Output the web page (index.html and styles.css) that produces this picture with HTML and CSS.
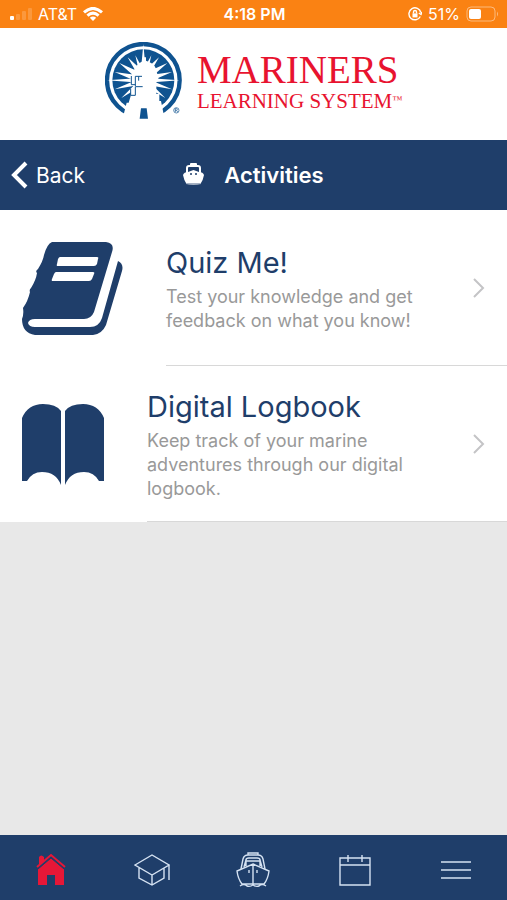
FILE: index.html
```html
<!DOCTYPE html>
<html lang="en">

<head>
  <meta charset="UTF-8">
  <meta name="viewport" content="width=device-width, initial-scale=1">
  <title>Activities</title>
  <link rel="stylesheet" href="styles.css">
</head>

<body>
  <div class="status-bar">
    <div class="status-left">
      <svg width="22" height="14" viewBox="0 0 22 14" fill="#fff">
        <rect x="0" y="9" width="4" height="4" rx="1" />
        <rect x="6" y="7" width="4" height="6" rx="1" opacity=".18" />
        <rect x="12" y="4" width="4" height="9" rx="1" opacity=".18" />
        <rect x="18" y="1" width="4" height="12" rx="1" opacity=".18" />
      </svg>
      <span>AT&amp;T</span>
      <svg width="20" height="14" viewBox="0 0 20 14" fill="none" stroke="#fff" stroke-width="3">
        <path d="M1 5.4Q10-2.6 19 5.4M4.4 8.6Q10 3.700 15.6 8.6" />
        <path d="M10 14L6.8 10.8Q10 8.2 13.2 10.8Z" fill="#fff" stroke="none" />
      </svg>
    </div>
    <div class="status-time">4:18 PM</div>
    <div class="status-right">
      <svg width="14" height="14" viewBox="0 0 14 14" fill="none" stroke="#fff" stroke-width="1.4">
        <path d="M12.3 9.5A6 6 0 1 1 12.8 5.500M10.8 6L13 7.5L14 5" />
        <rect x="4.5" y="6.4" width="5" height="4" fill="#fff" stroke="none" />
        <path d="M5.5 6.5V5A1.5 1.5 0 0 1 8.5 5V6.5" />
      </svg>
      <span>51%</span>
      <svg width="33" height="16" viewBox="0 0 33 16">
        <rect x="1" y="1" width="28" height="14" rx="4" fill="none" stroke="#fff" stroke-opacity=".45" />
        <rect x="3" y="3" width="12" height="10" rx="2" fill="#fff" />
        <path d="M31 5.5Q33 8 31 10.5Z" fill="#fff" opacity=".45" />
      </svg>
    </div>
  </div>

  <header class="brand">
    <svg class="brand-mark" viewBox="27 22 231 237">
      <circle cx="142" cy="137" r="109" fill="#fff" stroke="#0f5390" stroke-width="13" />
      <circle cx="142" cy="137" r="93" fill="#0f5390" />
      <!-- compass points and light rays -->
      <g fill="#fff">
        <path d="M142 28L152 137H132ZM33 137L142 129V145ZM251 137L142 129V145Z" />
        <path d="M70 85L152 122L134 142ZM95 68L154 122L134 136ZM118 62L154 128L134 134ZM56 112L144 124L140 148Z" />
        <path d="M214 85L132 122L150 142ZM189 68L130 122L150 136ZM166 62L130 128L150 134ZM228 112L140 124L144 148Z" />
        <path d="M56 164L144 126L146 148ZM76 190L136 130L150 146ZM228 164L140 126L138 148ZM208 190L148 130L134 146Z" />
      </g>
      <!-- lighthouse -->
      <path d="M142 68H150V78Q182 88 183 116L187 121V139H181V178H190V199H195L207 259H78L92 204H98L104 184V162H112V151H106V120H111Q114 91 142 78Z" fill="#fff" />
      <path d="M104 162V182H118V156H140M118 154V125H138M128 125V138M106 124V150H118" fill="none" stroke="#0f5390" stroke-width="3" />
      <path d="M135 221H152L156 252H131Z" fill="#0f5390" />
      <circle cx="241" cy="227" r="8" fill="none" stroke="#0f5390" stroke-width="2" />
      <path d="M238 232V222H242Q246 225 242 227H238M242 227L245 232" fill="none" stroke="#0f5390" stroke-width="2" />
    </svg>
    <div class="brand-text">
      <div class="brand-name">MARINERS</div>
      <div class="brand-sub">LEARNING SYSTEM<span class="brand-tm">™</span></div>
    </div>
  </header>

  <nav class="title-bar">
    <button class="back" type="button">
      <svg width="18" height="28" viewBox="0 0 18 28" fill="none" stroke="#fff" stroke-width="4">
        <path d="M16 2L4 14L16 26" />
      </svg>
      Back
    </button>
    <h1 class="page-title">
      <svg width="21" height="24" viewBox="0 0 21 24" fill="#fff">
        <path d="M4 10V5Q4 3 6 3H15Q17 3 17 5V10" fill="none" stroke="#fff" stroke-width="2" />
        <rect x="7" y="0" width="7" height="3" rx="1" />
        <path d="M0 12Q1 9 5 9L10.5 7L16 9Q20 9 21 12Q20 17 18 20H3Q1 17 0 12Z" />
        <path d="M3 20H18V21Q15 22 10.5 22Q6 22 3 21Z" opacity=".6" />
        <path d="M8 10V12M13 10V12" stroke="#1f3e6a" stroke-width="1.5" />
      </svg>
      Activities
    </h1>
  </nav>

  <main class="list">
    <a class="row" href="#quiz">
      <svg class="row-icon-book" viewBox="0 0 101 93">
        <path d="M30 0H84Q93 1 90 10L72 70Q69 77 62 77H13Q7 77 6 81Q7 85 13 85H68Q77 85 80 76L96 19Q102 22 100 29L84 83Q80 92 71 93H13Q0 91 0 77Q2 72 1 66Q6 59 8 50Q7 48 9 46Q14 38 15 31Q13 29 16 27Q21 19 22 13Q25 2 30 0Z" fill="#1f3e6a" />
        <path d="M38 15H75Q77 15 76 17L75 22Q74 24 72 24H36Q34 24 35 22L36 17Q37 15 38 15ZM34 30H71Q73 30 72 32L70 37Q69 39 67 39H31Q29 39 30 37L32 32Q33 30 34 30Z" fill="#fff" />
      </svg>
      <div class="row-body">
        <div class="row-text">
          <h2>Quiz Me!</h2>
          <p>Test your knowledge and get feedback on what you know!</p>
        </div>
        <svg class="chevron" viewBox="0 0 12 20">
          <path d="M1 1L10 10L1 19" />
        </svg>
      </div>
    </a>
    <a class="row" href="#logbook">
      <svg class="row-icon-pages" viewBox="0 0 82 81">
        <path d="M0 77V14Q6 0 21 0Q34 0 39 7V81Q34 68 20 68Q10 68 5 77ZM82 77V14Q76 0 61 0Q48 0 43 7V81Q48 68 62 68Q72 68 77 77Z" fill="#1f3e6a" />
      </svg>
      <div class="row-body">
        <div class="row-text">
          <h2>Digital Logbook</h2>
          <p>Keep track of your marine adventures through our digital logbook.</p>
        </div>
        <svg class="chevron" viewBox="0 0 12 20">
          <path d="M1 1L10 10L1 19" />
        </svg>
      </div>
    </a>
  </main>

  <nav class="tab-bar">
    <a href="#home" aria-label="Home">
      <svg width="32" height="34" viewBox="0 0 32 34" fill="#e61737">
        <path d="M4 13V4Q6 1 9 4V8L4 13ZM3 16L16 5L29 16V32H20V22H12V32H3Z" />
        <path d="M2 14L16 2L30 14" fill="none" stroke="#e61737" stroke-width="2" />
        <path d="M3 16L16 5L29 16" fill="none" stroke="#1f3e6a" stroke-width="1" />
      </svg>
    </a>
    <a href="#courses" aria-label="Courses">
      <svg class="tab-line" width="36" height="34" viewBox="0 0 36 34">
        <path d="M1 12L18 2L35 12L18 22ZM5 15V25L18 32L30 25V15M18 22V32M35 12V27" />
      </svg>
    </a>
    <a href="#activities" aria-label="Activities">
      <svg class="tab-line" width="34" height="36" viewBox="0 0 34 36">
        <path d="M5 17L7 7Q8 3 12 3H22Q26 3 27 7L29 17M12 3V1H22V3M8 15L10 8Q10 6 13 6H21Q24 6 24 8L26 15M10 14V9H24V14" />
        <path d="M17 12L33 19Q32 27 28 32H6Q2 27 1 19ZM17 12V33M4 34Q8 31 11 34Q14 35 17 33Q20 35 23 34Q26 31 30 34M13 18V21M21 18V21" />
      </svg>
    </a>
    <a href="#calendar" aria-label="Calendar">
      <svg class="tab-line" width="32" height="34" viewBox="0 0 32 34">
        <path d="M1 5H31V32H1ZM1 12H31M9 2V9M23 2V9" />
      </svg>
    </a>
    <a href="#menu" aria-label="Menu">
      <svg class="tab-line" width="32" height="34" viewBox="0 0 32 34">
        <path d="M1 9H31M1 17H31M1 25H31" />
      </svg>
    </a>
  </nav>
</body>

</html>
```
FILE: styles.css
```css
* {
  box-sizing: border-box;
}

body {
  margin: 0;
  min-height: 100vh;
  display: flex;
  flex-direction: column;
  font-family: Inter, "Helvetica Neue", Arial, sans-serif;
  background-color: #e8e8e8;
}

svg {
  display: block;
  flex-shrink: 0;
}

a {
  color: inherit;
  text-decoration: none;
}

h1, h2, p {
  margin: 0;
  font-weight: 400;
}

/* status bar */
.status-bar {
  display: grid;
  grid-template-columns: 1fr auto 1fr;
  align-items: center;
  height: 28px;
  padding: 0 8px 0 10px;
  color: #fff;
  background-color: #fa8213;
  font-size: 16px;
  line-height: 20px;
}

.status-left,
.status-right {
  display: flex;
  align-items: center;
  gap: 6px;
}

.status-right {
  justify-content: flex-end;
}

.status-time {
  font-weight: 600;
}

/* logo */
.brand {
  display: flex;
  justify-content: center;
  gap: 15px;
  height: 112px;
  padding-top: 14px;
  background-color: #fff;
}

.brand-mark {
  width: 77px;
  height: 79px;
}

.brand-text {
  padding-top: 8px;
  color: #e8132f;
  font-family: "Liberation Serif", "Times New Roman", serif;
}

.brand-name {
  font-size: 39px;
  line-height: 40px;
}

.brand-sub {
  font-size: 21px;
  line-height: 22px;
}

.brand-tm {
  font-size: 10px;
  line-height: 10px;
  vertical-align: 5px;
}

/* title bar */
.title-bar {
  display: grid;
  grid-template-columns: 1fr auto 1fr;
  align-items: center;
  height: 70px;
  padding: 0 10px;
  color: #fff;
  background-color: #1f3e6a;
}

.back {
  display: flex;
  align-items: center;
  gap: 8px;
  padding: 0;
  border: 0;
  background: none;
  color: inherit;
  font-family: inherit;
  font-size: 21px;
  cursor: pointer;
}

.page-title {
  display: flex;
  align-items: center;
  gap: 20px;
  font-size: 22px;
  font-weight: 600;
}

/* list */
.list {
  flex: 1;
}

.row {
  display: flex;
  align-items: center;
  gap: 43px;
  padding-left: 22px;
  background-color: #fff;
}

.row-icon-book {
  width: 101px;
  height: 93px;
}

.row-icon-pages {
  width: 82px;
  height: 81px;
}

.row-body {
  flex: 1;
  display: flex;
  align-items: center;
  justify-content: space-between;
  gap: 28px;
  min-height: 156px;
  padding-right: 22px;
  border-bottom: 1px solid #d8d8d8;
}

.row-text {
  padding-top: 2px;
}

.row-text h2 {
  margin-bottom: 4px;
  color: #1f3e6a;
  font-size: 29px;
  line-height: 36px;
}

.row-text p {
  color: #999;
  font-size: 18px;
  line-height: 24px;
}

.chevron {
  width: 12px;
  height: 20px;
  fill: none;
  stroke: #c4c4c6;
  stroke-width: 2;
}

/* bottom tabs */
.tab-bar {
  display: grid;
  grid-template-columns: repeat(5, 1fr);
  height: 65px;
  background-color: #1f3e6a;
}

.tab-bar a {
  display: flex;
  align-items: center;
  justify-content: center;
  padding-top: 4px;
}

.tab-line {
  fill: none;
  stroke: #d5e2f2;
  stroke-width: 1.4;
}
```
